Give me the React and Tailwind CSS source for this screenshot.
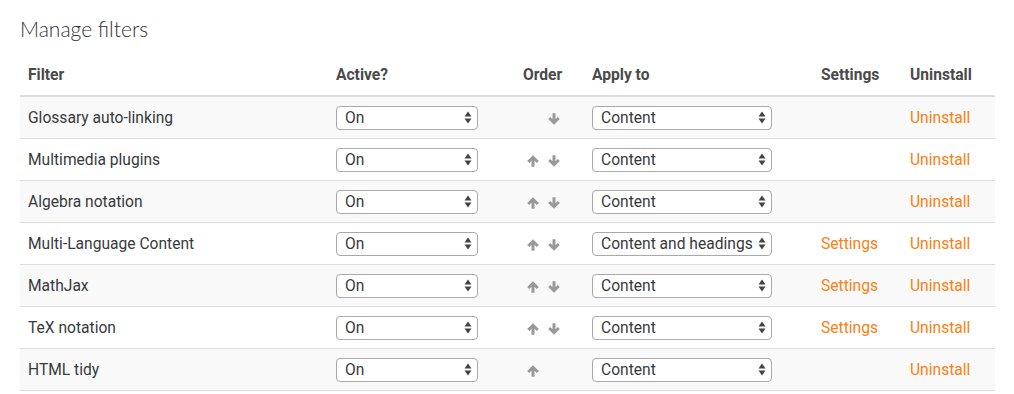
import React from "react";

const rows = [
  { name: "Glossary auto-linking", up: false, down: true, apply: "Content", settings: false },
  { name: "Multimedia plugins", up: true, down: true, apply: "Content", settings: false },
  { name: "Algebra notation", up: true, down: true, apply: "Content", settings: false },
  { name: "Multi-Language Content", up: true, down: true, apply: "Content and headings", settings: true },
  { name: "MathJax", up: true, down: true, apply: "Content", settings: true },
  { name: "TeX notation", up: true, down: true, apply: "Content", settings: true },
  { name: "HTML tidy", up: true, down: false, apply: "Content", settings: false },
];

const cols = "grid grid-cols-[308px_173px_83px_229px_89px_93px]";

function UpDownIcon() {
  return (
    <svg width="8" height="13" viewBox="0 0 8 13" className="absolute right-[6px] top-[5px] pointer-events-none">
      <path d="M4 0.5 L7.5 5.5 L0.5 5.5 Z" fill="#444" />
      <path d="M4 12.5 L7.5 7.5 L0.5 7.5 Z" fill="#444" />
    </svg>
  );
}

function FakeSelect({ value, width }) {
  return (
    <div className={`relative h-[24px] ${width}`}>
      <select
        defaultValue={value}
        className="appearance-none w-full h-full border border-[#a9a9a9] rounded-[4px] bg-white pl-[8px] pr-[16px] text-[15.6px] leading-[22px] text-[#373a3c] outline-none"
        style={{ fontFamily: "Roboto, 'Liberation Sans', sans-serif" }}
      >
        <option>{value}</option>
      </select>
      <UpDownIcon />
    </div>
  );
}

function Arrow({ dir }) {
  return (
    <svg width="12" height="12" viewBox="0 0 12 12">
      {dir === "up" ? (
        <path d="M6 0.3 L11.8 6 L9.7 8 L7.5 5.8 L7.5 11.8 L4.5 11.8 L4.5 5.8 L2.3 8 L0.2 6 Z" fill="#999" />
      ) : (
        <path d="M6 11.7 L11.8 6 L9.7 4 L7.5 6.2 L7.5 0.2 L4.5 0.2 L4.5 6.2 L2.3 4 L0.2 6 Z" fill="#999" />
      )}
    </svg>
  );
}

export default function App() {
  return (
    <div
      className="bg-white w-[1014px] h-[394px] px-5 pt-[15px] text-[#373a3c]"
      style={{ fontFamily: "Roboto, 'Liberation Sans', sans-serif" }}
    >
      <h2
        className="text-[21px] font-light text-[#333] leading-[28px] mb-[14px]"
        style={{ fontFamily: "Lato, 'Open Sans', sans-serif" }}
      >
        Manage filters
      </h2>
      <div className="w-[975px]">
        <div className={`${cols} border-b-2 border-[#dedede] text-[15.6px] font-bold text-[#4a4a4a] h-[40px] items-center`}>
          <div className="px-2">Filter</div>
          <div className="px-2">Active?</div>
          <div className="px-2 text-center">Order</div>
          <div className="px-2">Apply to</div>
          <div className="px-2">Settings</div>
          <div className="px-2">Uninstall</div>
        </div>
        {rows.map((r, i) => (
          <div
            key={r.name}
            className={`${cols} h-[42px] items-center border-b border-[#dedede] text-[15.6px] ${i % 2 === 0 ? "bg-[#f9f9f9]" : "bg-white"}`}
          >
            <div className="px-2 pt-[3px]">{r.name}</div>
            <div className="px-2">
              <FakeSelect value="On" width="w-[142px]" />
            </div>
            <div className="flex justify-center gap-[9px] pl-[2px] pt-[2px]">
              <span className="w-[12px] flex">{r.up && <Arrow dir="up" />}</span>
              <span className="w-[12px] flex">{r.down && <Arrow dir="down" />}</span>
            </div>
            <div className="px-2">
              <FakeSelect value={r.apply} width="w-[180px]" />
            </div>
            <div className="px-2 pt-[3px]">
              {r.settings && <a className="text-[#f98012]" href="#">Settings</a>}
            </div>
            <div className="px-2 pt-[3px]">
              <a className="text-[#f98012]" href="#">Uninstall</a>
            </div>
          </div>
        ))}
      </div>
    </div>
  );
}
